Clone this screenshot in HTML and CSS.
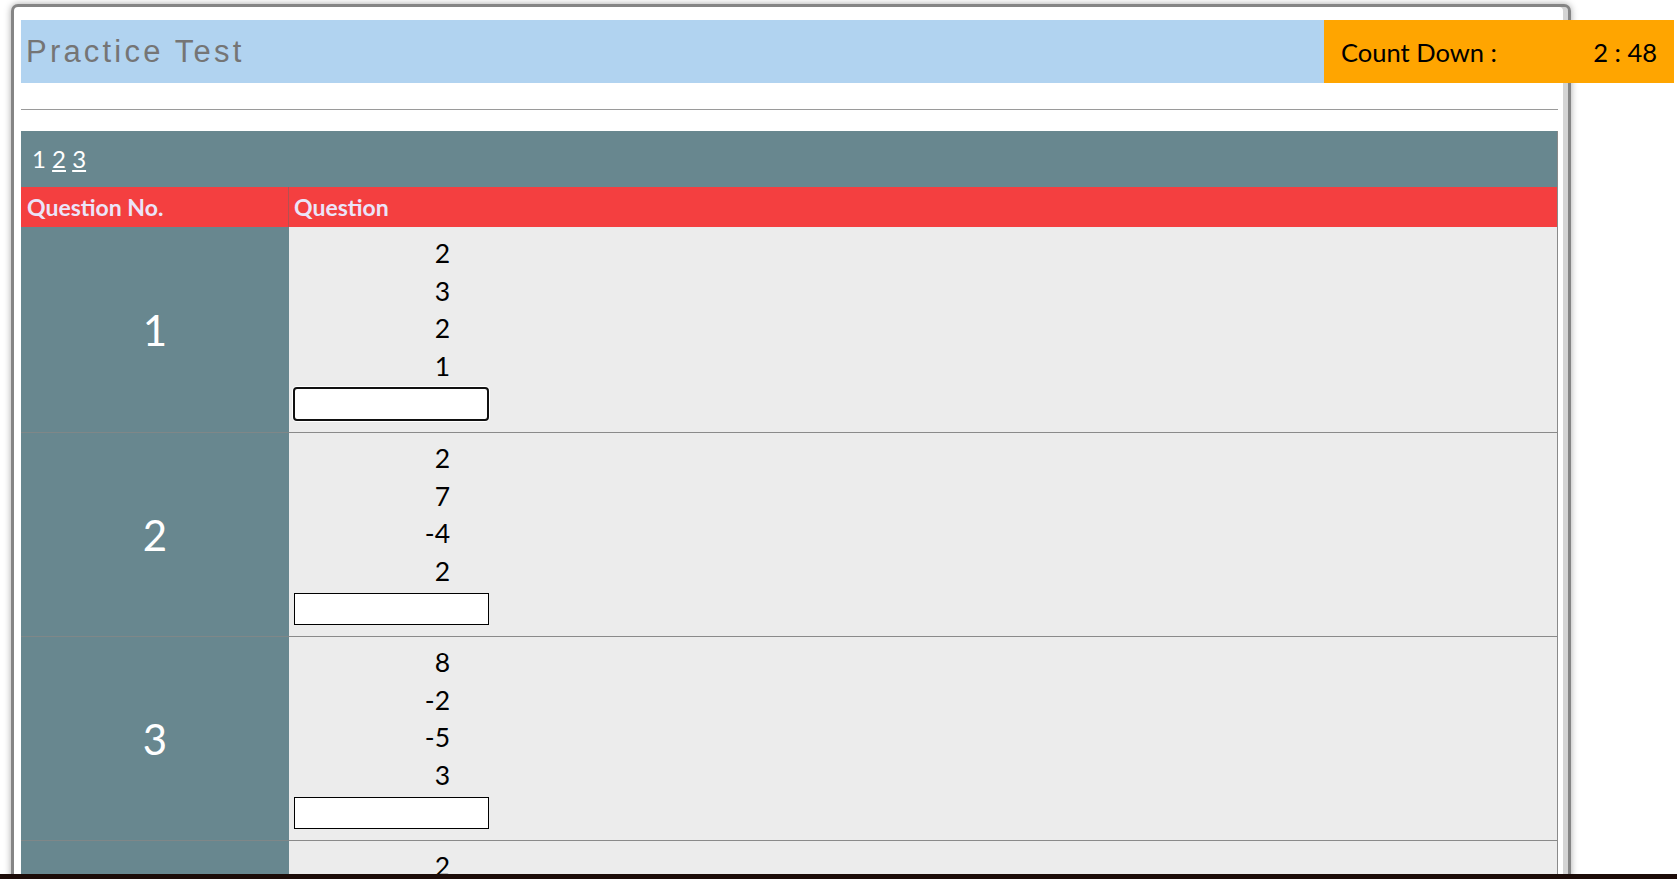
FILE: index.html
```html
<!DOCTYPE html>
<html lang="en">
<head>
<meta charset="utf-8">
<title>Practice Test</title>
<link rel="stylesheet" href="styles.css">
</head>
<body>
<div class="window">
  <div class="header">
    <div class="title">Practice Test</div>
    <div class="countdown"><span class="cd-label">Count Down :</span><span class="cd-time">2 : 48</span></div>
  </div>
  <div class="rule"></div>
  <div class="quiz">
    <div class="pager"><span>1</span> <a href="#">2</a> <a href="#">3</a></div>
    <div class="thead">
      <div class="th th-no">Question No.</div>
      <div class="th">Question</div>
    </div>
    <div class="row row-first">
      <div class="qno">1</div>
      <div class="qbody">
        <div class="nums"><div>2</div><div>3</div><div>2</div><div>1</div></div>
        <div class="answer active"></div>
      </div>
    </div>
    <div class="row">
      <div class="qno">2</div>
      <div class="qbody">
        <div class="nums"><div>2</div><div>7</div><div>-4</div><div>2</div></div>
        <div class="answer"></div>
      </div>
    </div>
    <div class="row">
      <div class="qno">3</div>
      <div class="qbody">
        <div class="nums"><div>8</div><div>-2</div><div>-5</div><div>3</div></div>
        <div class="answer"></div>
      </div>
    </div>
    <div class="row">
      <div class="qno">4</div>
      <div class="qbody">
        <div class="nums"><div>2</div><div>5</div><div>-1</div><div>4</div></div>
        <div class="answer"></div>
      </div>
    </div>
  </div>
</div>
<div class="taskbar"></div>
</body>
</html>
```

FILE: styles.css
```css
html, body {
  margin: 0;
  padding: 0;
  height: 879px;
  overflow: hidden;
  background: #ffffff;
  font-family: "Lato", "Open Sans", sans-serif;
}

.window {
  margin: 4px 0 0 11px;
  width: 1537px;
  height: 1100px;
  padding: 13px 10px 0 7px;
  box-sizing: content-box;
  border: 3px solid #858585;
  border-radius: 7px;
  background: #ffffff;
  box-shadow: 0 0 7px rgba(0, 0, 0, 0.35), inset -5px 0 0 #d4d4d4;
}

.header {
  display: flex;
  width: 1653px;
  height: 63px;
}

.title {
  flex: 1;
  background: #b1d3f0;
  color: #757575;
  font-family: "Liberation Sans", Arial, sans-serif;
  font-size: 31px;
  letter-spacing: 3.2px;
  line-height: 63px;
  padding-left: 5px;
}

.countdown {
  width: 350px;
  box-sizing: border-box;
  background: #ffa500;
  color: #000;
  display: flex;
  justify-content: space-between;
  align-items: center;
  padding: 0 17px 0 17px;
  font-size: 25.5px;
}

.rule {
  margin-top: 26px;
  height: 0;
  border-top: 1px solid #9a9a9a;
}

.quiz {
  margin-top: 21px;
  border-right: 1px solid #8a8a8a;
}

.pager {
  background: #68878f;
  height: 56px;
  line-height: 56px;
  padding-left: 11px;
  color: #fff;
  font-size: 24px;
}

.pager a {
  color: #fff;
  text-decoration: underline;
}

.thead {
  display: grid;
  grid-template-columns: 268px 1fr;
  height: 40px;
  background: #f43f40;
  color: #ebe4f8;
  font-weight: bold;
  font-size: 23px;
  line-height: 40px;
}

.th {
  padding-left: 5px;
}

.th-no {
  padding-left: 6px;
  border-right: 1px solid #b55050;
  box-sizing: border-box;
}

.row {
  display: grid;
  grid-template-columns: 268px 1fr;
  height: 204px;
}

.row-first {
  height: 206px;
}

.qno {
  background: #68878f;
  color: #fff;
  font-size: 42px;
  display: flex;
  align-items: center;
  justify-content: center;
  border-bottom: 1px solid #7f8788;
}

.qbody {
  background: #ececec;
  border-bottom: 1px solid #8a8a8a;
  padding: 7px 5px 0 5px;
}

.row-first .qbody {
  padding-top: 8px;
}

.nums {
  width: 156px;
  text-align: right;
  font-size: 26.5px;
  line-height: 37.5px;
  color: #000;
}

.answer {
  margin-top: 3px;
  width: 195px;
  height: 32px;
  box-sizing: border-box;
  background: #fff;
  border: 1px solid #000;
}

.answer.active {
  width: 196px;
  height: 34px;
  margin-top: 2px;
  margin-left: -1px;
  border: 2px solid #111;
  border-radius: 4px;
  box-shadow: 0 0 0 1px #fff;
}

.taskbar {
  position: fixed;
  left: 0;
  right: 0;
  bottom: 0;
  height: 5px;
  background: #1c0c08;
}
```
